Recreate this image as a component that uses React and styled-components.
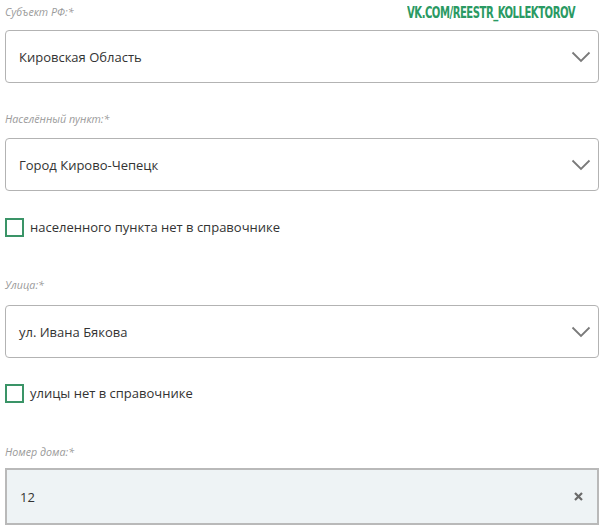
import React from "react";
import styled, { createGlobalStyle } from "styled-components";

const Global = createGlobalStyle`
  html, body { margin: 0; padding: 0; background: #fff; }
  body { font-family: "Open Sans", "Noto Sans", sans-serif; }
`;

const Page = styled.div`
  position: relative;
  width: 604px;
  height: 532px;
  overflow: hidden;
  padding: 2px 5px 0 5px;
  box-sizing: border-box;
  display: flex;
  flex-direction: column;
`;

const Watermark = styled.div`
  position: absolute;
  top: 3px;
  left: 407px;
  font-family: "DejaVu Sans Condensed", "DejaVu Sans", sans-serif;
  font-weight: bold;
  font-size: 16px;
  line-height: 20px;
  letter-spacing: -0.7px;
  color: #2a9a63;
  transform: scaleX(0.7);
  transform-origin: left center;
  white-space: nowrap;
`;

const Label = styled.div`
  font-size: 10.7px;
  font-style: italic;
  color: #9a9a9a;
  line-height: 20px;
  height: 20px;
  margin-top: ${(p) => p.$mt || 0}px;
  margin-bottom: ${(p) => p.$mb || 8}px;
`;

const Select = styled.div`
  height: ${(p) => p.$h || 53}px;
  box-sizing: border-box;
  border: 1px solid ${(p) => (p.$flat ? "#b9b9b9" : "#b3b3b3")};
  border-width: ${(p) => (p.$flat ? "2px" : "1px")};
  border-radius: ${(p) => (p.$flat ? 0 : 4)}px;
  background: ${(p) => (p.$flat ? "#eef3f5" : "#fff")};
  display: flex;
  align-items: center;
  justify-content: space-between;
  padding: 0 ${(p) => (p.$flat ? 14 : 7)}px 0 13px;
  font-size: 13px;
  color: #333;
`;

const Check = styled.label`
  display: flex;
  align-items: center;
  gap: 6px;
  height: 20px;
  margin-top: ${(p) => p.$mt}px;
  font-size: 13px;
  color: #333;
`;

const Box = styled.span`
  width: 19px;
  height: 19px;
  box-sizing: border-box;
  border: 2px solid #3a9467;
  background: #fff;
`;

const Chevron = () => (
  <svg width="20" height="12" viewBox="0 0 20 12">
    <path d="M1.5 1.5 L10 10 L18.5 1.5" fill="none" stroke="#7a7a7a" strokeWidth="1.8" />
  </svg>
);

const Cross = () => (
  <svg width="9" height="9" viewBox="0 0 9 9">
    <path d="M1 1 L8 8 M8 1 L1 8" stroke="#6a6a6a" strokeWidth="2.2" />
  </svg>
);

export default function App() {
  return (
    <>
      <Global />
      <Page>
        <Watermark>VK.COM/REESTR_KOLLEKTOROV</Watermark>
        <Label>Субъект РФ:*</Label>
        <Select>
          Кировская Область
          <Chevron />
        </Select>
        <Label $mt={26} $mb={9}>Населённый пункт:*</Label>
        <Select>
          Город Кирово-Чепецк
          <Chevron />
        </Select>
        <Check $mt={26}>
          <Box />
          населенного пункта нет в справочнике
        </Check>
        <Label $mt={38} $mb={10}>Улица:*</Label>
        <Select>
          ул. Ивана Бякова
          <Chevron />
        </Select>
        <Check $mt={25}>
          <Box />
          улицы нет в справочнике
        </Check>
        <Label $mt={39} $mb={6}>Номер дома:*</Label>
        <Select $flat $h={57}>
          12
          <Cross />
        </Select>
      </Page>
    </>
  );
}
